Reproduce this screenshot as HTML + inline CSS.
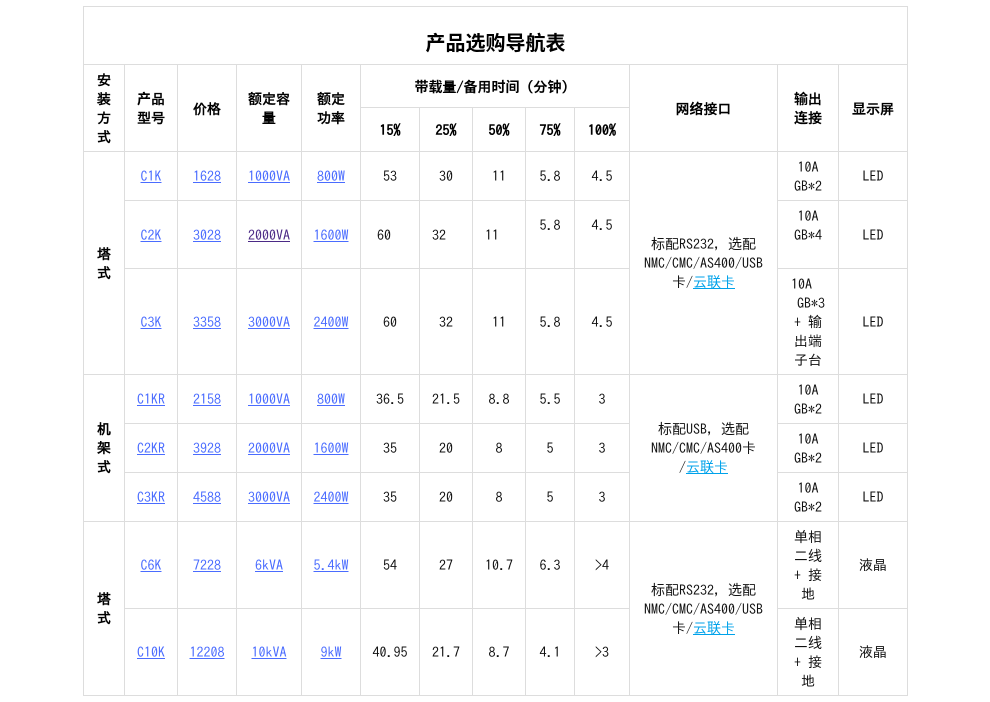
<!DOCTYPE html>
<html lang="zh-CN">
<head>
<meta charset="utf-8">
<title>产品选购导航表</title>
<style>
html,body{margin:0;padding:0;background:#fff;width:990px;height:702px;overflow:hidden}
table{position:absolute;left:83px;top:6px;width:825px;table-layout:fixed;border-collapse:separate;border-spacing:0;border-top:1px solid #ddd;border-left:1px solid #ddd;font:14px/19px IPAGothic,"Noto Sans CJK SC",monospace;color:#111}
td,th{box-sizing:border-box;border-right:1px solid #ddd;border-bottom:1px solid #ddd;padding:1px 0 0;text-align:center;vertical-align:middle;white-space:nowrap;font-weight:normal}
th{font-family:IPAGothic,"Noto Sans CJK SC",sans-serif;font-weight:bold;color:#000}
tr.m td,tr.m th,td.m,th.m{padding-top:2px}
td.t{font:bold 20px/30px "Noto Sans CJK SC",sans-serif;color:#000;padding-top:12px}
a{color:#4a6cff;text-decoration:underline}
a.v{color:#4b2a86}
a.c{color:#00a2ea}
td.l{text-align:left}
tr.m td.up{vertical-align:top;padding-top:15px}
.b{display:block}
</style>
</head>
<body>
<table>
<colgroup><col style="width:41px"><col style="width:53px"><col style="width:59px"><col style="width:65px"><col style="width:59px"><col style="width:59px"><col style="width:53px"><col style="width:53px"><col style="width:49px"><col style="width:55px"><col style="width:148px"><col style="width:61px"><col style="width:69px"></colgroup>
<tr style="height:58px"><td colspan="13" class="t">产品选购导航表</td></tr>
<tr class="m" style="height:43px"><th rowspan="2">安<br>装<br>方<br>式</th><th rowspan="2">产品<br>型号</th><th rowspan="2">价格</th><th rowspan="2">额定容<br>量</th><th rowspan="2">额定<br>功率</th><th colspan="5">带载量/备用时间（分钟）</th><th rowspan="2">网络接口</th><th rowspan="2">输出<br>连接</th><th rowspan="2">显示屏</th></tr>
<tr class="m" style="height:44px"><th>15%</th><th>25%</th><th>50%</th><th>75%</th><th>100%</th></tr>
<tr style="height:49px"><th class="m" rowspan="3">塔<br>式</th><td><a href="#">C1K</a></td><td><a href="#">1628</a></td><td><a href="#">1000VA</a></td><td><a href="#">800W</a></td><td>53</td><td>30</td><td>11</td><td>5.8</td><td>4.5</td><td rowspan="3">标配RS232，选配<br>NMC/CMC/AS400/USB<br>卡/<a class="c" href="#">云联卡</a></td><td class="m">10A<br>GB*2</td><td>LED</td></tr>
<tr class="m" style="height:68px"><td><a href="#">C2K</a></td><td><a href="#">3028</a></td><td><a class="v" href="#">2000VA</a></td><td><a href="#">1600W</a></td><td class="l" style="padding-left:16px">60</td><td class="l" style="padding-left:12px">32</td><td class="l" style="padding-left:12px">11</td><td class="up">5.8</td><td class="up">4.5</td><td>10A<br>GB*4<br>&nbsp;</td><td>LED</td></tr>
<tr class="m" style="height:106px"><td><a href="#">C3K</a></td><td><a href="#">3358</a></td><td><a href="#">3000VA</a></td><td><a href="#">2400W</a></td><td>60</td><td>32</td><td>11</td><td>5.8</td><td>4.5</td><td class="l" style="padding-left:13px">10A<span class="b" style="margin-left:6px">GB*3</span><span class="b" style="margin-left:3px">+ 输</span><span class="b" style="margin-left:3px">出端</span><span class="b" style="margin-left:3px">子台</span></td><td>LED</td></tr>
<tr style="height:49px"><th rowspan="3">机<br>架<br>式</th><td><a href="#">C1KR</a></td><td><a href="#">2158</a></td><td><a href="#">1000VA</a></td><td><a href="#">800W</a></td><td>36.5</td><td>21.5</td><td>8.8</td><td>5.5</td><td>3</td><td rowspan="3">标配USB，选配<br>NMC/CMC/AS400卡<br>/<a class="c" href="#">云联卡</a></td><td class="m">10A<br>GB*2</td><td>LED</td></tr>
<tr style="height:49px"><td><a href="#">C2KR</a></td><td><a href="#">3928</a></td><td><a href="#">2000VA</a></td><td><a href="#">1600W</a></td><td>35</td><td>20</td><td>8</td><td>5</td><td>3</td><td class="m">10A<br>GB*2</td><td>LED</td></tr>
<tr style="height:49px"><td><a href="#">C3KR</a></td><td><a href="#">4588</a></td><td><a href="#">3000VA</a></td><td><a href="#">2400W</a></td><td>35</td><td>20</td><td>8</td><td>5</td><td>3</td><td class="m">10A<br>GB*2</td><td>LED</td></tr>
<tr style="height:87px"><th rowspan="2">塔<br>式</th><td><a href="#">C6K</a></td><td><a href="#">7228</a></td><td><a href="#">6kVA</a></td><td><a href="#">5.4kW</a></td><td>54</td><td>27</td><td>10.7</td><td>6.3</td><td>&gt;4</td><td class="m" rowspan="2">标配RS232，选配<br>NMC/CMC/AS400/USB<br>卡/<a class="c" href="#">云联卡</a></td><td class="m">单相<br>二线<br>+ 接<br>地</td><td>液晶</td></tr>
<tr style="height:87px"><td><a href="#">C10K</a></td><td><a href="#">12208</a></td><td><a href="#">10kVA</a></td><td><a href="#">9kW</a></td><td>40.95</td><td>21.7</td><td>8.7</td><td>4.1</td><td>&gt;3</td><td class="m">单相<br>二线<br>+ 接<br>地</td><td>液晶</td></tr>
</table>
</body>
</html>
